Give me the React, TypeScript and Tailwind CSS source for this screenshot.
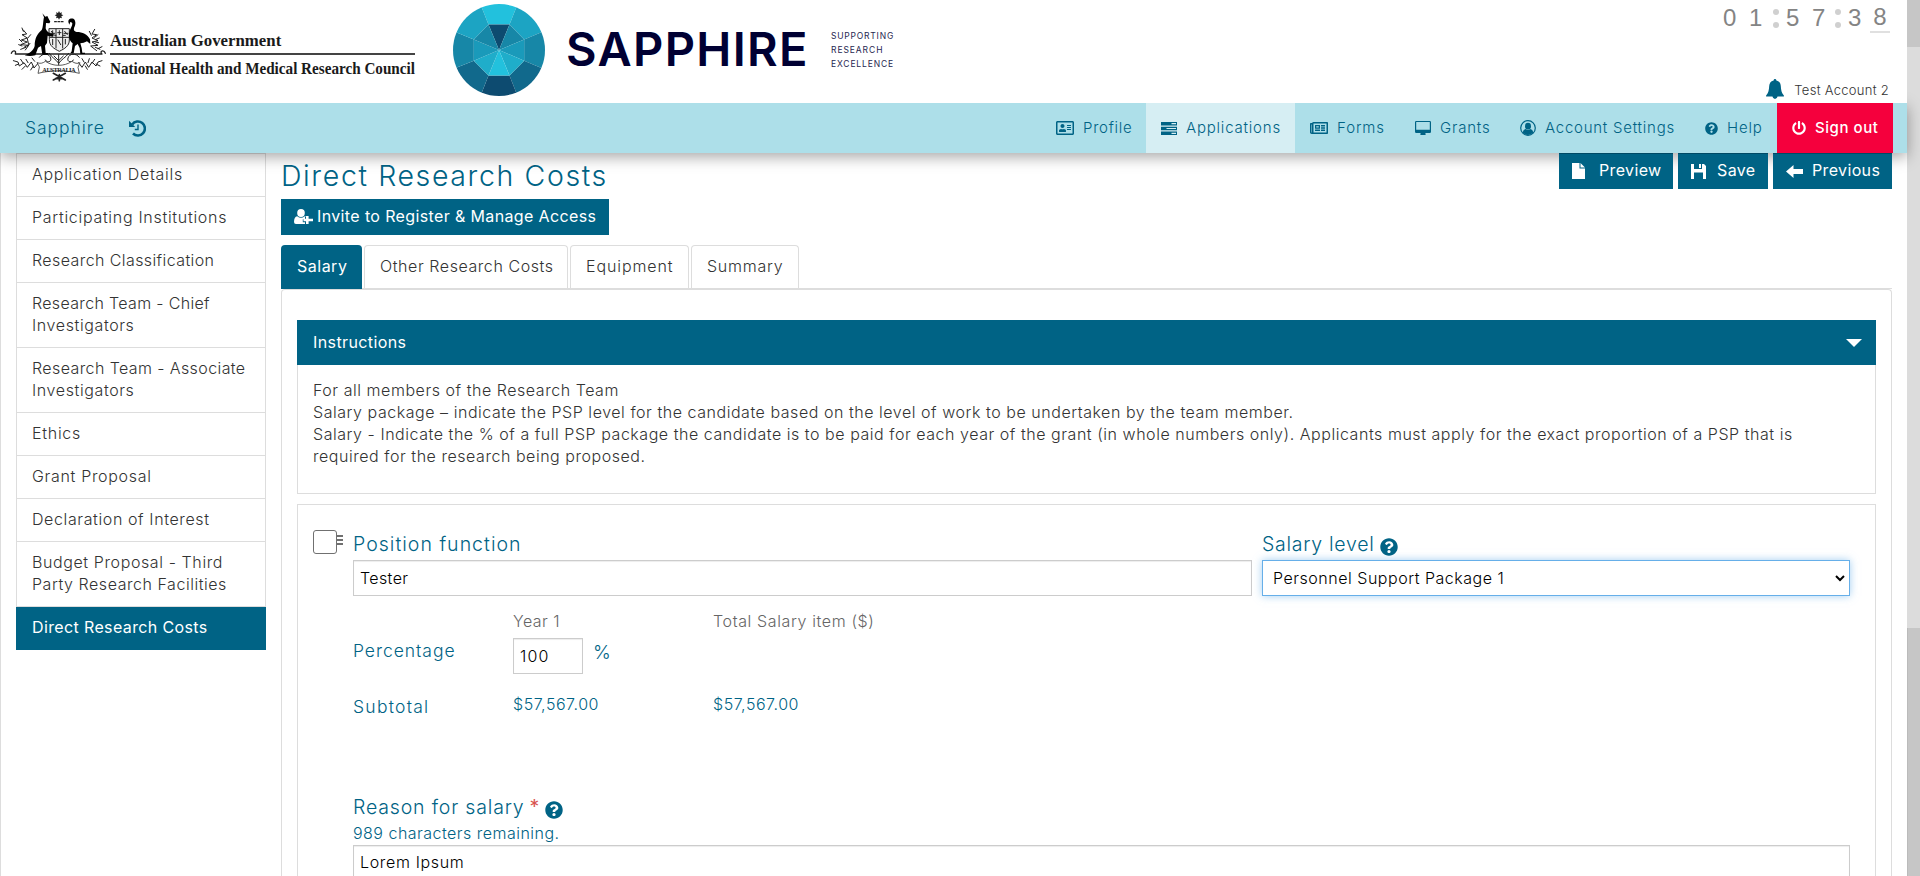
import React from "react";
import { FaRegAddressCard, FaRegNewspaper, FaQuestionCircle, FaPowerOff } from "react-icons/fa";

function Crest() {
  return (
    <svg className="h-[72px] w-[98px] shrink-0" viewBox="30 30 294 216">
      <g fill="none" stroke="#222" strokeWidth="2.2" strokeLinecap="round">
        <path d="M34 160c4-12 16-8 12 0M46 162h260M316 160c-4-12-16-8-12 0" strokeWidth="4" />
        <path d="M70 90l10 12-14 2 16 10-18 6 18 6-20 8 24 2-10 14M92 104l-10 12 4 18-14 8M58 118l8 8M62 148l16-6M90 130l-8 10M66 84l4 10M56 134l10 4" strokeWidth="3" />
        <path d="M284 88l-8 14 14 2-14 10 18 8-18 4 18 10-22 2 18 14M294 104l-10 8M296 128l-10-2M300 148l-14-6M288 118l10-4M268 94l6 12M306 140l-12 6" strokeWidth="3" />
        <path d="M40 182l14 4 4 12 14-10 10 14 12-16 8 18 12-14M46 196l10-4M62 178l8 12M78 178l6 10M66 208l10-10M92 210l8-12M96 174l8 10" strokeWidth="3" />
        <path d="M306 182l-12 4-6 12-12-12-10 16-10-16-10 16-10-14M300 198l-12-6M284 178l-8 12M268 176l-4 12M262 208l-6-10M246 176l6 10" strokeWidth="3" />
        <path d="M118 172c10-14 30-12 34 2 4 12-12 16-16 6M238 172c-10-14-30-12-34 2-4 12 12 16 16 6" strokeWidth="3" />
        <path d="M148 160c8 14 18 16 28 30 10-14 20-16 30-30M176 164v34M162 168l14 14 14-14" strokeWidth="3" />
        <path d="M112 188c8 4 16 2 24-4 24 16 56 16 80 0 8 6 16 8 24 4l-6 14 4 18c-40-10-84-10-124 0l4-18z" fill="#fff" />
        <path d="M160 220l36 20M196 220l-36 20M166 236h22M178 224v18" strokeWidth="5" />
        <path d="M148 86h60v34c0 18-14 26-30 34-16-8-30-16-30-34z" fill="#eee" strokeWidth="3" />
        <path d="M168 88v56M188 88v56M150 112h56M154 94l8 10M158 92v14M173 98h10M178 92v12M194 94l8 10M158 118v16M174 120l8 14M196 118v14M164 106h4M190 106h6M152 100h12M192 100h12" strokeWidth="3" />
        <path d="M164 65h5M174 65h5M184 65h5" strokeWidth="4" />
      </g>
      <path d="M177 33l3 6 6-2-2 6 6 3-6 3 2 6-6-2-3 6-3-6-6 2 2-6-6-3 6-3-2-6 6 2z" fill="#222" />
      <path d="M127 40l9 10 6-2 4 8 5 9-3 5-10-1-1 16c2 8 10 16 20 16l4 4-2 5-16-3-2 22-6 8 2 22h8v5h-18l-4-26c-6 4-8 4-10 8l-7 20c-12 3-24 2-32 0 14-6 26-14 30-28 0-24 8-36 21-48 5-8 4-28 7-38z" fill="#000" />
      <path d="M206 60c4-5 14-6 18 0 4 8 2 16-2 24-2 8 2 10 8 12 18 0 32 6 40 22l1 14-10-8c-6 4-14 6-20 6l4 14 2 14h8v4h-14l-2-18-6-12-8 6-4 22h-10l4-6 3-24c-10-8-14-22-9-38 3-8 8-14 8-22l-4-4c-3-1-4 4-4 8-4-4-5-10-3-14z" fill="#000" />
      <text x="177" y="217" textAnchor="middle" fontSize="19" fontWeight="700" fontFamily="Liberation Serif" textLength="100" fill="#222">AUSTRALIA</text>
    </svg>
  );
}

function Gem() {
  return (
    <svg className="h-[92px] w-[92px] shrink-0" viewBox="68.500 11.500 276 276">
      <defs><clipPath id="gem"><circle cx="206.500" cy="149.500" r="138" /></clipPath></defs>
      <g clipPath="url(#gem)">
        <path d="M175 73L146 0H267L238 73Z" fill="#22c1dd" />
        <path d="M238 73L267 0H360V85L282 118Z" fill="#1ca4c3" />
        <path d="M282 118L360 85V214L282 182Z" fill="#1787a7" />
        <path d="M282 182L360 214V300H267L238 226Z" fill="#11698c" />
        <path d="M238 226L267 300H146L175 226Z" fill="#0d4b70" />
        <path d="M175 226L146 300H50V214L131 182Z" fill="#11698c" />
        <path d="M131 182L50 214V85L131 118Z" fill="#1787a7" />
        <path d="M131 118L50 85V0H146L175 73Z" fill="#1ca4c3" />
        <path d="M206.500 149.500L175 73H238Z" fill="#0d4b70" />
        <path d="M206.500 149.500L238 73L282 118Z" fill="#1787a7" />
        <path d="M206.500 149.500L282 118V182Z" fill="#1a9aba" />
        <path d="M206.500 149.500L282 182L238 226Z" fill="#1fadca" />
        <path d="M206.500 149.500L238 226H175Z" fill="#22c1dd" />
        <path d="M206.500 149.500L175 226L131 182Z" fill="#1fadca" />
        <path d="M206.500 149.500L131 182V118Z" fill="#1a9aba" />
        <path d="M206.500 149.500L131 118L175 73Z" fill="#1787a7" />
      </g>
    </svg>
  );
}

function HistoryIcon() {
  return (
    <svg className="size-[17px] shrink-0" viewBox="0 0 17 17">
      <path d="M3.200 4.400A7 7 0 1 1 4 13.500" fill="none" stroke="#006385" strokeWidth="2.600" />
      <path d="M0 .8L6.200 7H0z" fill="#006385" />
      <path d="M9 4.500v5H5.800" fill="none" stroke="#006385" strokeWidth="1.400" />
    </svg>
  );
}

function TasksIcon() {
  return (
    <svg className="h-[13px] w-4 shrink-0" viewBox="0 0 16 13" fill="#006385">
      <path fillRule="evenodd" d="M0 0h16v3.400H0zM10.500 1.100v1.200H15V1.100zM0 4.800h16v3.400H0zM5.500 5.900v1.200H15V5.900zM0 9.600h16V13H0zM10.500 10.700v1.200H15v-1.200z" />
    </svg>
  );
}

function DesktopIcon() {
  return (
    <svg className="h-[14px] w-4 shrink-0" viewBox="0 0 16 14" fill="#006385">
      <path fillRule="evenodd" d="M1.200 0h13.600Q16 0 16 1.200v9.600q0 1.200-1.200 1.200H10.300l.4 1.300q.2.700-.6.700H5.900q-.8 0-.6-.7L5.700 12H1.200Q0 12 0 10.800V1.200Q0 0 1.200 0zM1.200 1.100v7.700h13.600V1.100z" />
    </svg>
  );
}

function UserIcon() {
  return (
    <svg className="h-4 w-4 shrink-0" viewBox="0 0 16 16" fill="#006385">
      <circle cx="8" cy="8" r="7.300" fill="none" stroke="#006385" strokeWidth="1.200" />
      <ellipse cx="8" cy="6.200" rx="3" ry="3.400" />
      <path d="M2.700 12.600c.4-2 1.500-3.200 2.900-3.500 1.500 1.200 3.300 1.200 4.800 0 1.400.3 2.500 1.500 2.900 3.500a7 7 0 0 1-10.600 0z" />
    </svg>
  );
}

function UserPlusIcon() {
  return (
    <svg className="h-[15px] w-[19px] shrink-0" viewBox="0 0 19 15" fill="#fff">
      <ellipse cx="7" cy="4" rx="3.800" ry="4" />
      <path d="M3.200 7.300q3.800 3 7.600 0 .8.200 1.200.7H11v2.300H8.800v3H11V15H2q-2 0-2-2 0-5 3.200-5.700zM12 7h2.600v2.700H19v2.600h-4.400V15H12v-2.700H9.500V9.700H12z" />
    </svg>
  );
}

function BellIcon() {
  return (
    <svg className="h-5 w-[18px] shrink-0" viewBox="0 0 18 20" fill="#006385">
      <path d="M9 0q1.300 0 1.400 1.400C13.500 2.200 14.600 4.300 14.800 7c.2 4 .8 7 2.700 9q.8.900.3 1.500H.2q-.5-.6.300-1.500c1.900-2 2.500-5 2.700-9 .2-2.700 1.300-4.800 4.400-5.600Q7.700 0 9 0zM6.300 17.300h5.400Q11 20 9 20t-2.700-2.700z" />
    </svg>
  );
}

function FileIcon() {
  return (
    <svg className="mt-px h-4 w-[13px] shrink-0" viewBox="0 0 13 16" fill="#fff">
      <path d="M0 0h7.500v5.500H13V16H0zM8.500 0L13 4.500H8.500z" />
    </svg>
  );
}

function FloppyIcon() {
  return (
    <svg className="mt-[2px] h-[15px] w-[15px] shrink-0" viewBox="0 0 15 15" fill="#fff">
      <path fillRule="evenodd" d="M0 0h3v5h8V0h2l2 2v13h-3V8.500H3V15H0zM8 0h2v4H8z" />
    </svg>
  );
}

function ArrowIcon() {
  return (
    <svg className="mt-[3px] h-[13px] w-[17px] shrink-0" viewBox="0 0 17 13" fill="#fff">
      <path d="M0 6.500L7.500 0v4H17v5H7.500v4z" />
    </svg>
  );
}

function Colon() {
  return (
    <span className="mt-[5px] flex w-[13px] flex-col gap-[7px]">
      <i className="size-[6px] rounded-full bg-[#d0d0d0]" />
      <i className="size-[6px] rounded-full bg-[#d0d0d0]" />
    </span>
  );
}

const sidebar: { lines: [string, string][]; active?: boolean }[] = [
  { lines: [["Application Details", "tracking-[0.71px]"]] },
  { lines: [["Participating Institutions", "tracking-[0.7px]"]] },
  { lines: [["Research Classification", "tracking-[0.41px]"]] },
  { lines: [["Research Team - Chief", "tracking-[0.33px]"], ["Investigators", "tracking-[0.61px]"]] },
  { lines: [["Research Team - Associate", "tracking-[0.4px]"], ["Investigators", "tracking-[0.61px]"]] },
  { lines: [["Ethics", "tracking-[0.72px]"]] },
  { lines: [["Grant Proposal", "tracking-[0.68px]"]] },
  { lines: [["Declaration of Interest", "tracking-[0.61px]"]] },
  { lines: [["Budget Proposal - Third", "tracking-[0.6px]"], ["Party Research Facilities", "tracking-[0.54px]"]] },
  { lines: [["Direct Research Costs", "tracking-[0.37px]"]], active: true },
];

const navItem = "flex h-full items-center gap-[9px] pl-[15px] text-[15px] whitespace-nowrap ";
const tab = "flex items-center rounded-t border border-b-0 border-[#ddd] pb-[2px] pl-[15px] ";
const action = "flex items-center border-t border-[#004a66] bg-[#006385] px-[13px] pb-[3px] ";
const field = "flex h-9 items-center border border-[#ccc] pl-[6px] text-black shadow-[inset_0_1px_1px_rgba(0,0,0,0.075)] ";

export default function App() {
  return (
    <div className="flex h-screen w-full overflow-hidden bg-white font-['Inter',sans-serif] text-base leading-[22px] font-[350] text-[#333]">
      <div className="flex min-w-0 flex-1 flex-col">
        <header className="relative z-20 flex h-[103px] shrink-0 items-start bg-white">
          <div className="flex pt-[10px] pl-[10px]">
            <Crest />
            <div className="ml-[2px] w-[305px] pt-[20px] font-['Liberation_Serif',serif] text-[17.500px] leading-[20px] font-bold whitespace-nowrap text-[#1a1a1a]">
              <div className="h-[23px]"><span className="inline-block origin-left scale-x-[0.96]">Australian Government</span></div>
              <div className="h-[2px] bg-[#444]" />
              <div className="pt-[3px]"><span className="inline-block origin-left scale-x-[0.866]">National Health and Medical Research Council</span></div>
            </div>
          </div>
          <div className="ml-[38px] flex pt-1">
            <Gem />
            <div className="ml-[21px] w-[243px] pt-[15px] text-[47px] leading-[60px] font-semibold tracking-[1.35px] text-[#000033]">SAPPHIRE</div>
            <div className="ml-[22px] pt-[24.500px] text-[8.500px] leading-[14.300px] font-normal text-[#26264f]">
              <div className="tracking-[0.79px]">SUPPORTING</div>
              <div className="tracking-[0.92px]">RESEARCH</div>
              <div className="tracking-[0.86px]">EXCELLENCE</div>
            </div>
          </div>
          <div className="ml-auto flex h-full flex-col items-end justify-between pr-[18px]">
            <div className="-mr-px flex pt-[4px] font-['Liberation_Sans',sans-serif] text-2xl leading-[28px] font-normal text-[#848484]">
              <span className="w-[26px]">0</span>
              <span className="w-[24px]">1</span>
              <Colon />
              <span className="w-[26px]">5</span>
              <span className="w-[23px]">7</span>
              <Colon />
              <span className="w-[22px]">3</span>
              <span className="-mt-px h-[30px] w-5 border-b-2 border-[#e0e0e0] text-center">8</span>
            </div>
            <div className="flex h-6 gap-[10px]">
              <BellIcon />
              <div className="text-[13px] leading-[22px] tracking-[0.28px]">Test Account 2</div>
            </div>
          </div>
        </header>
        <nav className="relative z-10 flex h-[50px] shrink-0 items-center bg-[#addfe9] pr-[14px] pl-[25px] font-light text-[#006385] shadow-[0_4px_14px_rgba(0,0,0,0.35)]">
          <span className="w-[104px] text-[17.500px] tracking-[0.95px]">Sapphire</span>
          <HistoryIcon />
          <div className="ml-auto flex h-full">
            <div className={navItem + "w-[105px] tracking-[0.74px]"}><FaRegAddressCard className="size-[18px]" />Profile</div>
            <div className={navItem + "w-[149px] bg-[#d6eef3] tracking-[0.8px]"}><TasksIcon />Applications</div>
            <div className={navItem + "w-[105px] tracking-[0.9px]"}><FaRegNewspaper className="size-[18px]" />Forms</div>
            <div className={navItem + "w-[105px] tracking-[0.8px]"}><DesktopIcon />Grants</div>
            <div className={navItem + "w-[185px] tracking-[0.75px]"}><UserIcon />Account Settings</div>
            <div className={navItem + "w-[87px] tracking-[0.79px]"}><FaQuestionCircle className="size-[13px]" />Help</div>
            <div className={navItem + "w-[116px] bg-[#f5003d] font-medium tracking-[0.56px] text-white"}><FaPowerOff className="size-[14px]" />Sign out</div>
          </div>
        </nav>
        <div className="flex min-h-0 flex-1 border-l border-[#ddd] px-[15px]">
          <aside className="w-[250px] shrink-0 whitespace-nowrap">
            <div className="border-t border-[#ddd]">
              {sidebar.map((item) => (
                <div key={item.lines[0][0]} className={item.active ? "bg-[#006385] px-[16px] pt-[9px] pb-[12px] font-[420] text-white" : "border-x border-b border-[#ddd] px-[15px] pt-[9px] pb-[11px]"}>
                  {item.lines.map(([text, tracking]) => <div key={text} className={tracking}>{text}</div>)}
                </div>
              ))}
            </div>
          </aside>
          <main className="ml-[15px] flex min-w-0 flex-1 flex-col whitespace-nowrap">
            <div className="flex h-[46px] shrink-0 justify-between">
              <h1 className="text-[28.500px] leading-[45px] font-light tracking-[1.61px] text-[#006385]">Direct Research Costs</h1>
              <div className="relative z-20 flex h-9 gap-[5px] font-[430] tracking-[0.36px] text-white">
                <button className={action + "w-[114px] gap-[14px]"}><FileIcon />Preview</button>
                <button className={action + "w-[90px] gap-[11px]"}><FloppyIcon />Save</button>
                <button className={action + "w-[119px] gap-[9px]"}><ArrowIcon />Previous</button>
              </div>
            </div>
            <button className="flex h-9 w-[328px] shrink-0 items-center gap-[4px] bg-[#006385] pb-[2px] pl-[13px] font-[430] tracking-[0.37px] text-white"><UserPlusIcon />Invite to Register &amp; Manage Access</button>
            <div className="mt-[10px] flex h-[44px] shrink-0 gap-[2px] border-b border-[#ddd]">
              <div className="flex h-[44px] w-[81px] items-center rounded-t bg-[#006385] pb-[2px] pl-4 font-[430] tracking-[0.5px] text-white">Salary</div>
              <div className={tab + "w-[204px] tracking-[0.57px]"}>Other Research Costs</div>
              <div className={tab + "w-[119px] tracking-[0.9px]"}>Equipment</div>
              <div className={tab + "w-[108px] tracking-[0.76px]"}>Summary</div>
            </div>
            <div className="flex min-h-0 flex-1 flex-col rounded-t border border-b-0 border-[#ddd] px-[15px] pt-[30px]">
              <div className="flex h-[45px] shrink-0 items-center justify-between bg-[#006385] pr-[14px] pb-px pl-4 font-[430] tracking-[0.4px] text-white">
                Instructions
                <svg className="mt-[2px] h-2 w-4" viewBox="0 0 16 8" fill="#fff"><path d="M0 0h16L8 8z" /></svg>
              </div>
              <div className="h-[129px] shrink-0 border border-t-0 border-[#ddd] pt-[14px] pl-[15px] tracking-[0.54px]">
                <div>For all members of the Research Team</div>
                <div>Salary package – indicate the PSP level for the candidate based on the level of work to be undertaken by the team member.</div>
                <div>Salary - Indicate the % of a full PSP package the candidate is to be paid for each year of the grant (in whole numbers only). Applicants must apply for the exact proportion of a PSP that is</div>
                <div>required for the research being proposed.</div>
              </div>
              <div className="mt-[10px] flex min-h-0 flex-1 overflow-hidden border border-b-0 border-[#ddd] pt-[25px] pl-[15px]">
                <div className="flex w-10 shrink-0 items-start">
                  <span className="size-6 rounded-[3px] border border-[#707070] bg-white" />
                  <svg className="mt-[5px] h-[11px] w-[6px]" viewBox="0 0 6 11" fill="#707070"><path d="M0 0h6v2H0zM0 4h6v2H0zM0 8h6v2H0z" /></svg>
                </div>
                <div className="w-[1497px] text-[#006385]">
                  <div className="flex gap-[10px]">
                    <div className="w-[899px]">
                      <div className="h-[30px] text-[19.500px] leading-[28px] font-light tracking-[1.02px]">Position function</div>
                      <div className={field + "tracking-[0.39px]"}>Tester</div>
                    </div>
                    <div className="w-[588px]">
                      <div className="flex h-[30px] gap-[5px] text-[19.500px] leading-[28px] font-light tracking-[0.73px]">Salary level<FaQuestionCircle className="mt-2 size-[18px]" /></div>
                      <div className="flex h-9 items-center justify-between border border-[#66afe9] pr-[4px] pl-[10px] tracking-[0.52px] text-black shadow-[0_0_8px_rgba(102,175,233,0.6)]">
                        Personnel Support Package 1
                        <svg className="h-[7px] w-[10px]" viewBox="0 0 10 7"><path d="M1 1l4 4 4-4" fill="none" stroke="#000" strokeWidth="2" /></svg>
                      </div>
                    </div>
                  </div>
                  <div className="grid grid-cols-[160px_200px_1fr]">
                    <span />
                    <div className="pt-[14px] tracking-[0.47px] text-[#666]">Year 1</div>
                    <div className="pt-[14px] tracking-[0.62px] text-[#666]">Total Salary item ($)</div>
                    <div className="h-[42px] pt-[8px] text-[17.500px] font-light tracking-[0.96px]">Percentage</div>
                    <div className="flex gap-[10px] pt-[6px]">
                      <div className={field + "w-[70px] tracking-[1.14px]"}>100</div>
                      <div className="pt-[4px] text-[19px] font-light">%</div>
                    </div>
                    <span />
                    <div className="pt-[22px] text-[17.500px] font-light tracking-[1.26px]">Subtotal</div>
                    <div className="pt-[19px] tracking-[0.52px]">$57,567.00</div>
                    <div className="pt-[19px] tracking-[0.52px]">$57,567.00</div>
                  </div>
                  <div className="mt-[75px] flex h-[29px] text-[19.500px] leading-[28px] font-light tracking-[0.83px]">
                    Reason for salary
                    <span className="ml-[5px] font-normal text-[#d9534f]">*</span>
                    <FaQuestionCircle className="mt-2 ml-[5px] size-[18px]" />
                  </div>
                  <div className="h-[23px] tracking-[0.48px]">989 characters remaining.</div>
                  <div className="h-[60px] border border-[#ccc] pt-[5px] pl-[6px] tracking-[0.66px] text-black shadow-[inset_0_1px_1px_rgba(0,0,0,0.075)]">Lorem Ipsum</div>
                </div>
              </div>
            </div>
          </main>
        </div>
      </div>
      <div className="flex w-[13px] shrink-0 flex-col bg-[#dcdcdc]">
        <div className="h-[47px] bg-[#c6c6c6]" />
        <div className="mt-[581px] flex-1 border-l border-[#bbb] bg-[#c6c6c6]" />
      </div>
    </div>
  );
}
